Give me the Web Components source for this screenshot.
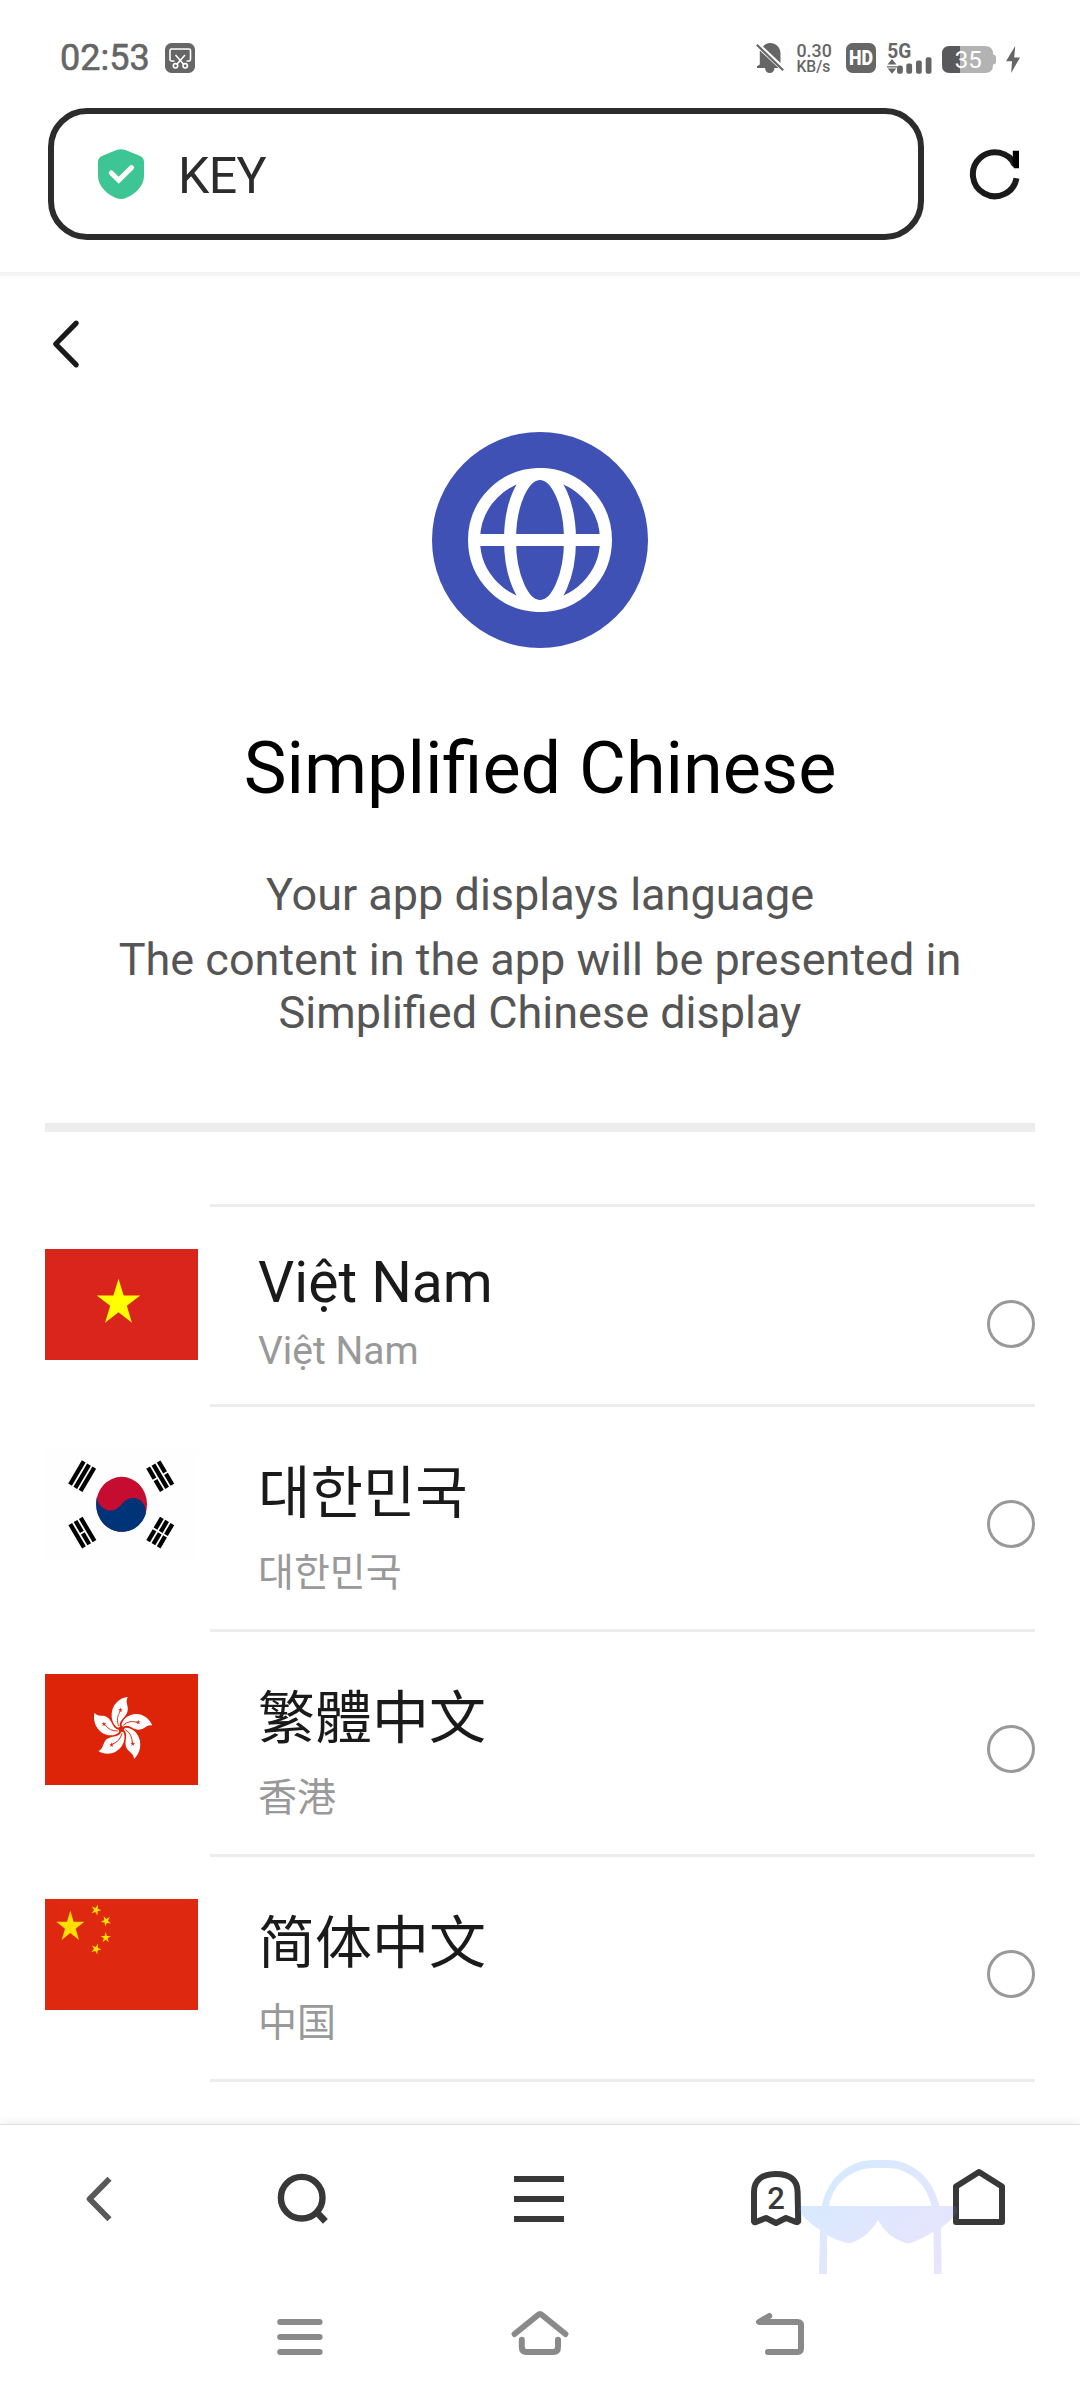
<!DOCTYPE html>
<html lang="en">
<head>
<meta charset="utf-8">
<title>Language</title>
<style>
html,body{margin:0;background:#fff}
body{width:1080px;height:2400px;overflow:hidden;font-family:Roboto,"Noto Sans CJK SC",sans-serif}
</style>
</head>
<body>
<language-app></language-app>
<script>
const star=(cx,cy,r,sx=1,rot=0)=>{
  let p='';
  for(let i=0;i<10;i++){
    const a=(i*36-90+rot)*Math.PI/180,q=i%2?r*.382:r;
    p+=(i?'L':'M')+(cx+Math.cos(a)*q*sx).toFixed(2)+' '+(cy+Math.sin(a)*q).toFixed(2);
  }
  return p+'Z';
};
const define=(name,css,html)=>customElements.define(name,class extends HTMLElement{
  constructor(){
    super();
    this.attachShadow({mode:'open'}).innerHTML=`<style>${css}</style>${typeof html==='function'?html(this):html}`;
  }
});

const trigram=(x,y,rot,rows)=>`<g transform="translate(${x} ${y}) rotate(${rot})">`+rows.map((solid,i)=>{
  const yy=-8.2+i*6.1;
  return solid?`<rect x="-13.5" y="${yy}" width="27" height="4.3"/>`
    :`<rect x="-13.5" y="${yy}" width="12.6" height="4.3"/><rect x=".9" y="${yy}" width="12.6" height="4.3"/>`;
}).join('')+'</g>';

const flags={
  vn:`<rect width="153" height="111" fill="#da251d"/><path fill="#ff0" d="${star(73.5,54,24.3,.94)}"/>`,
  kr:`<rect width="153" height="111" fill="#fefefe"/><ellipse cx="76.6" cy="55.3" rx="25.4" ry="27.5" fill="#c60c30"/>
    <path fill="#003478" d="M52.2 46.5C51 54 58 61.5 66 61.5C76 61.5 77 49 88 49C97 49 102 58 100.6 65.5C97 76 88 82.8 76.6 82.8C62.5 82.8 51.2 70.5 51.2 55.3C51.2 52 51.5 49 52.2 46.5Z"/>
    ${trigram(37.2,27.2,120.5,[1,1,1])}${trigram(115.3,27.2,59.5,[0,1,0])}${trigram(37.4,83.6,59.5,[1,0,1])}${trigram(115.3,83.6,120.5,[0,0,0])}`,
  hk:`<rect width="153" height="111" fill="#de2408"/><g transform="translate(76.4 55) scale(.95 1)">${[0,72,144,216,288].map(a=>`<g transform="rotate(${a})">
    <path fill="#fff" d="M6.8-32C-2-31.5-10.3-24-10.3-13.8C-10.3-8.5-8-4-4.2-1.6C-2.8-1.4-2-1.6-1.6-2.6C-3-10.5 8.5-12 6.5-22.5C5.8-26 4.6-28.5 6.8-32Z"/>
    <path fill="#de2408" d="${star(-1,-19,2.6)}"/><path d="M-1-18Q-6.3-11-3-3" fill="none" stroke="#de2408" stroke-width=".9"/></g>`).join('')}</g>`,
  cn:`<rect width="153" height="111" fill="#de2910"/><path fill="#ffde00" d="${star(25.3,27.8,16.4,.9)}${star(51,11,5.6,.95,20)}${star(61,22,5.6,.95,45)}${star(60.7,38.7,5.6,.95,0)}${star(51,50,5.6,.95,22)}"/>`
};
define('flag-image',':host{display:block;width:153px;height:111px}svg{display:block}',
  el=>`<svg width="153" height="111" viewBox="0 0 153 111">${flags[el.getAttribute('code')]}</svg>`);

/* Each icon: [width, height, viewBox origin, markup] */
const icons={
  shot:[30,30,'0 0',`<rect width="30" height="30" rx="6.5" fill="#666"/><g fill="none" stroke="#fff" stroke-width="1.6"><path d="M9.5 18H6.5Q5 18 5 16.5V7.5Q5 6 6.5 6H24Q25.5 6 25.5 7.5V16.5Q25.5 18 24 18H21.5M10.5 12L18.8 21.5M20 12L11.7 21.5"/><circle cx="10.5" cy="22.8" r="2.2"/><circle cx="20.2" cy="22.8" r="2.2"/></g>`],
  bell:[28,30,'0 0',`<path fill="#666" d="M7 3.6C8.8 1.2 11 0 14 0C20 0 24.5 4.5 24.5 10.5V20L7 3.6ZM3.8 7.5L22.5 25H18.5Q18 30 13.8 30Q9.5 30 9 25H1V23.2L3.8 21.5Z"/><path d="M.8 1.8L27.2 27.2" stroke="#666" stroke-width="2.2"/>`],
  hd:[30,30,'0 0',`<rect width="30" height="30" rx="6.5" fill="#666"/><text transform="translate(3 22.3) scale(1 1.13)" font-size="17.5" font-weight="900" fill="#fff" textLength="24" lengthAdjust="spacingAndGlyphs">HD</text>`],
  signal:[46,31,'0 0',`<text x=".2" y="14.7" font-size="20" font-weight="700" fill="#666" textLength="24" lengthAdjust="spacingAndGlyphs">5G</text><g fill="#666"><path d="M.5 21.5L5 16L9.5 21.5ZM0 23.2H10V24.4H0ZM.7 25.5H9.3L5 30.7Z"/><rect x="10" y="22.5" width="5.8" height="8.2" rx="2"/><rect x="19.3" y="20.5" width="5.8" height="10.2" rx="2"/><rect x="29" y="17.5" width="5.8" height="13.2" rx="2"/><rect x="38.7" y="14.3" width="5.8" height="16.4" rx="2"/></g>`],
  battery:[54,27,'0 0',`<path fill="#b3b3b3" d="M8 0H43Q51 0 51 8V8.5Q54 9 54 11V16Q54 18 51 18.5V19Q51 27 43 27H8Q0 27 0 19V8Q0 0 8 0Z"/><path fill="#595959" d="M18 0V27H8Q0 27 0 19V8Q0 0 8 0Z"/><text x="26.3" y="21.8" font-size="24" fill="#fff" text-anchor="middle">35</text>`],
  bolt:[14,27,'0 0',`<path fill="#666" d="M9.2 0L0 15.3H6L5.2 27L14 11.4H8.2Z"/>`],
  shield:[46,50,'0 0',`<path fill="#3dc596" d="M18.5 1Q23 -.7 27.5 1L41.5 6.7Q46 8.5 46 13V27C46 38 36 45.5 28 49Q23 51 18 49C10 45.5 0 38 0 27V13Q0 8.5 4.5 6.7Z"/><path d="M13.3 24L20.7 31.2L33.5 18.6" fill="none" stroke="#fff" stroke-width="5" stroke-linecap="round"/>`],
  reload:[50,50,'0 0',`<path d="M46.5 29.3A22 22 0 1 1 45 16.3" fill="none" stroke="#1a1a1a" stroke-width="6"/><path fill="#000" d="M42.8 1.8H49V19.3H43.8L42.8 16Z"/>`],
  prev:[28,48,'0 0',`<path d="M24.2 3.2L3.7 24L24.2 44.8" fill="none" stroke="#1a1a1a" stroke-width="5.2" stroke-linecap="round" stroke-linejoin="round"/>`],
  globe:[216,216,'0 0',`<circle cx="108" cy="108" r="108" fill="#3f51b5"/><g fill="none" stroke="#fff" stroke-width="12"><circle cx="108" cy="108" r="66"/><ellipse cx="108" cy="108" rx="30" ry="66"/><path d="M42 108H174"/></g>`],
  back:[28,48,'85 2175',`<path d="M109.5 2178.8L89.6 2199L109.5 2219.2" fill="none" stroke="#595959" stroke-width="5.8" stroke-linejoin="round" stroke-linecap="butt"/>`],
  search:[54,54,'276 2172',`<circle cx="301.7" cy="2197.7" r="20.8" fill="none" stroke="#383838" stroke-width="6.4"/><path d="M316 2211.5L325.4 2221.3" stroke="#383838" stroke-width="6.8"/>`],
  menu:[50,46,'0 0',`<path d="M0 3H50M0 23H50M0 43H50" stroke="#383838" stroke-width="6"/>`],
  tabs:[54,60,'749 2169',`<path fill="none" stroke="#383838" stroke-width="6" stroke-linejoin="round" d="M754 2221.5V2192C754 2180 762 2174 776 2174C790 2174 797.6 2180 797.6 2192L798.2 2221.5Q797.5 2222.6 796 2222L786 2218L776 2223L766 2218L756 2222Q754.5 2222.6 754 2221.5Z"/><text x="776" y="2208.7" font-size="31" font-weight="500" fill="#383838" text-anchor="middle">2</text>`],
  home:[54,60,'952 2168',`<path fill="none" stroke="#383838" stroke-width="6" stroke-linejoin="round" d="M979 2172L1002 2186.5V2222H956V2186.5Z"/>`],
  recents:[46,36,'277 2319',`<path d="M280.2 2322H319.6M280.2 2337H319.6M280.2 2352H319.6" stroke="#8a8a8a" stroke-width="6" stroke-linecap="round"/>`],
  sysHome:[58,46,'511 2310',`<path d="M514.6 2334L538 2315Q540 2313.4 542 2315L565.4 2334M521.8 2339.8V2347Q521.8 2352 526.5 2352H553.3Q558 2352 558 2347V2339.8" fill="none" stroke="#8a8a8a" stroke-width="6" stroke-linecap="round" stroke-linejoin="round"/>`],
  sysBack:[50,44,'755 2312',`<path d="M769.3 2316L759 2322H797.5Q801 2322 801 2325.5V2348.5Q801 2352 797.5 2352H768" fill="none" stroke="#8a8a8a" stroke-width="6" stroke-linecap="round" stroke-linejoin="round"/>`],
  hat:[162,118,'797 2158',`<defs><linearGradient id="g" x1="0" y1="0" x2="1" y2="1"><stop offset="0" stop-color="#1496ff"/><stop offset="1" stop-color="#9b6cf5"/></linearGradient></defs><path opacity=".19" fill="url(#g)" d="M821.7 2206C829 2175 851 2160 874 2160H887C910 2160 932 2175 939.4 2206H955Q958 2208 956.5 2213Q950 2222 941 2227.5L941.6 2274H934L933.6 2232Q922 2239 911 2243Q907 2244 903 2242Q886 2236 878 2220Q869 2236 852.5 2242.5Q849 2244 845 2242.5Q835 2240 827 2235V2274H819L820 2230Q809 2223 800 2213Q797.5 2208 801 2206ZM829 2206H931.5C926 2181 907 2168 886 2168H875C853 2168 834 2181 829 2206Z" fill-rule="evenodd"/>`]
};
define('ui-icon',':host{display:block;flex:none}svg{display:block;overflow:visible;font-family:Roboto,sans-serif}',
  el=>{const [w,h,o,m]=icons[el.getAttribute('name')];return `<svg width="${w}" height="${h}" viewBox="${o} ${w} ${h}">${m}</svg>`;});

define('status-bar',`:host{display:flex;align-items:flex-start;box-sizing:border-box;height:108px;padding:43px 60px 0 60px;color:#666}
.time{font-size:36px;line-height:42px;margin:-6px 16px 0 0;width:89px;-webkit-text-stroke:.6px #666}
.right{display:flex;margin-left:auto;align-items:flex-start}
.speed{width:40px;margin:0 9.5px 0 13px;font-weight:500;font-size:17.8px;line-height:16px}.speed div+div{font-size:15.6px;line-height:14px;margin-top:1px}
.b{margin-top:3px}`,
`<div class="time">02:53</div><ui-icon name="shot"></ui-icon>
<div class="right"><ui-icon name="bell"></ui-icon><div class="speed"><div>0.30</div><div>KB/s</div></div><ui-icon name="hd"></ui-icon><ui-icon name="signal" style="margin:0 9px 0 11px"></ui-icon><ui-icon class="b" name="battery"></ui-icon><ui-icon class="b" name="bolt" style="margin-left:10px"></ui-icon></div>`);

define('address-bar',`:host{display:flex;align-items:flex-start;box-sizing:border-box;height:168px;padding:0 60px 0 48px;border-bottom:4px solid #f5f5f5}
.field{display:flex;align-items:center;box-sizing:border-box;width:876px;height:132px;border:6px solid #2c2c2c;border-radius:39px;padding-left:44px}
.txt{font-size:50px;line-height:60px;letter-spacing:-.6px;color:#2c2c2c;margin-left:34px;padding-top:4px}
.re{margin:41px 0 0 46px}`,
`<div class="field"><ui-icon name="shield"></ui-icon><div class="txt"><slot></slot></div></div><ui-icon class="re" name="reload"></ui-icon>`);

define('page-intro',`:host{display:flex;flex-direction:column;align-items:center;text-align:center;margin:0 45px;padding:44px 0 84px;border-bottom:9px solid #ededed}
.back{align-self:flex-start;margin:0 0 64px 6.5px}
h1{font-weight:400;font-size:72px;line-height:84px;color:#000;margin:79px 0 57px}
p{font-size:45px;line-height:53px;color:#555;margin:0 0 12px}p:last-child{margin:0;width:870px}`,
`<ui-icon class="back" name="prev"></ui-icon><ui-icon name="globe"></ui-icon>
<h1>Simplified Chinese</h1><p>Your app displays language</p><p>The content in the app will be presented in Simplified Chinese display</p>`);

define('language-row',`:host{display:flex;align-items:flex-start;height:197px;margin-bottom:3px}
.main{flex:1;display:flex;align-items:flex-start;height:155px;margin-left:12px;padding:42px 0 0 48px;border-bottom:3px solid #ededed}
flag-image{margin-top:42px}
.t{font-size:57px;line-height:67px;color:#1a1a1a}.s{font-size:39px;line-height:46px;color:#999;margin-top:12px}
i{box-sizing:border-box;width:48px;height:48px;border:3px solid #999;border-radius:50%;margin:51px 0 0 auto}
:host([cjk]){height:222px}:host([cjk]) .main{height:180px}
:host([cjk]) .t{line-height:82px;margin-top:-2px}:host([cjk]) .s{line-height:56px}`,
el=>`<flag-image code="${el.getAttribute('code')}"></flag-image><div class="main"><div><div class="t"><slot name="title"></slot></div><div class="s"><slot></slot></div></div><i></i></div>`);

define('browser-toolbar',`:host{position:relative;display:flex;align-items:flex-start;box-sizing:border-box;height:166px;border-top:1px solid #e1e1e1;background:#fff;box-shadow:0 -1px 9px rgba(0,0,0,.09)}
.hat{position:absolute;left:797px;top:33px}`,
`<ui-icon name="back" style="margin:50px 0 0 85px"></ui-icon><ui-icon name="search" style="margin:47px 0 0 163px"></ui-icon><ui-icon name="menu" style="margin:51px 0 0 184px"></ui-icon><ui-icon name="tabs" style="margin:44px 0 0 185px"></ui-icon><ui-icon name="home" style="margin:43px 0 0 149px"></ui-icon><ui-icon class="hat" name="hat"></ui-icon>`);

define('system-nav',`:host{display:flex;align-items:flex-start;height:110px;background:#fff;position:relative}`,
`<ui-icon name="recents" style="margin:29px 0 0 277px"></ui-icon><ui-icon name="sysHome" style="margin:20px 0 0 188px"></ui-icon><ui-icon name="sysBack" style="margin:22px 0 0 186px"></ui-icon>`);

define('language-app',`:host{display:flex;flex-direction:column;height:2400px}
.list{margin:72px 45px 0}.list::before{content:"";display:block;height:3px;margin-left:165px;background:#ededed}
browser-toolbar{margin-top:auto}
[lang=ko]{font-family:"Noto Sans CJK KR",sans-serif}[lang=zh-TW]{font-family:"Noto Sans CJK TC","Noto Sans CJK SC",sans-serif}[lang=zh-CN]{font-family:"Noto Sans CJK SC",sans-serif}`,
`<status-bar></status-bar><address-bar>KEY</address-bar><page-intro></page-intro>
<div class="list">
<language-row code="vn"><span slot="title">Việt Nam</span>Việt Nam</language-row>
<language-row code="kr" cjk lang="ko"><span slot="title">대한민국</span>대한민국</language-row>
<language-row code="hk" cjk lang="zh-TW"><span slot="title">繁體中文</span>香港</language-row>
<language-row code="cn" cjk lang="zh-CN"><span slot="title">简体中文</span>中国</language-row>
</div>
<browser-toolbar></browser-toolbar><system-nav></system-nav>`);
</script>
</body>
</html>
